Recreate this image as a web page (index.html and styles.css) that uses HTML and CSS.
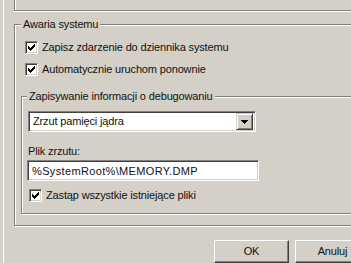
FILE: index.html
```html
<!DOCTYPE html>
<html lang="pl">
<head>
    <meta charset="UTF-8">
    <meta name="viewport" content="width=device-width, initial-scale=1.0">
    <title>Uruchamianie i odzyskiwanie</title>
    <link rel="stylesheet" href="styles.css">
</head>
<body>
    <div class="page">
        <div class="group-prev"></div>

        <fieldset class="group group-crash">
            <legend>Awaria systemu</legend>

            <label class="check">
                <span class="box"><svg width="7" height="7" viewBox="0 0 7 7" shape-rendering="crispEdges"><path d="M0 2h1v3H0zM1 3h1v3H1zM2 4h1v3H2zM3 3h1v3H3zM4 2h1v3H4zM5 1h1v3H5zM6 0h1v3H6z" fill="#000"/></svg></span>
                Zapisz zdarzenie do dziennika systemu
            </label>
            <label class="check">
                <span class="box"><svg width="7" height="7" viewBox="0 0 7 7" shape-rendering="crispEdges"><path d="M0 2h1v3H0zM1 3h1v3H1zM2 4h1v3H2zM3 3h1v3H3zM4 2h1v3H4zM5 1h1v3H5zM6 0h1v3H6z" fill="#000"/></svg></span>
                Automatycznie uruchom ponownie
            </label>

            <fieldset class="group group-debug">
                <legend>Zapisywanie informacji o debugowaniu</legend>

                <div class="combo">
                    <span class="combo-value">Zrzut pamięci jądra</span>
                    <span class="combo-btn"><svg width="7" height="4" viewBox="0 0 7 4" shape-rendering="crispEdges"><path d="M0 0h7v1H0zM1 1h5v1H1zM2 2h3v1H2zM3 3h1v1H3z" fill="#000"/></svg></span>
                </div>

                <div class="field-label">Plik zrzutu:</div>
                <div class="textbox">%SystemRoot%\MEMORY.DMP</div>

                <label class="check check-last">
                    <span class="box"><svg width="7" height="7" viewBox="0 0 7 7" shape-rendering="crispEdges"><path d="M0 2h1v3H0zM1 3h1v3H1zM2 4h1v3H2zM3 3h1v3H3zM4 2h1v3H4zM5 1h1v3H5zM6 0h1v3H6z" fill="#000"/></svg></span>
                    Zastąp wszystkie istniejące pliki
                </label>
            </fieldset>
        </fieldset>

        <div class="buttons">
            <button class="btn">OK</button>
            <button class="btn">Anuluj</button>
        </div>
    </div>
</body>
</html>
```

FILE: styles.css
```css
html, body {
    margin: 0;
    height: 100%;
    overflow: hidden;
}

body {
    background-color: #d4d0c8;
    font-family: 'Liberation Sans', Arial, sans-serif;
    font-size: 11px;
    line-height: 13px;
    letter-spacing: -0.15px;
    color: #111;
}

.page {
    margin-left: 3px;
    border-left: 1px solid #fff;
    height: 100%;
}

/* Etched group box, like the classic Windows one */
.group-prev {
    height: 10px;
    margin-left: 10px;
    margin-right: -20px;
    border-left: 1px solid #808080;
    border-bottom: 1px solid #808080;
    box-shadow: inset 1px 0 0 #fff, 0 1px 0 #fff;
}

.group {
    margin: 0;
    border: 1px solid #808080;
    box-shadow: inset 1px 1px 0 #fff, 1px 1px 0 #fff;
    min-width: 0;
}

.group legend {
    background-color: #d4d0c8;
    padding: 0 2px;
}

.group-crash {
    margin: 7px -20px 0 10px;
    padding: 10px 0 11px 10px;
}

.group-crash > legend {
    margin-left: -4px;
}

.group-debug {
    margin: 14px 0 0 -4px;
    padding: 8px 0 11px 6px;
}

.group-debug > legend {
    margin-left: -1px;
}

.check {
    display: flex;
    align-items: center;
    gap: 4px;
    height: 13px;
    margin-bottom: 9px;
}

.check-last {
    margin: 8px 0 0 1px;
}

.box {
    box-sizing: border-box;
    width: 13px;
    height: 13px;
    background-color: #fff;
    border: 1px solid;
    border-color: #808080 #fff #fff #808080;
    box-shadow: inset 1px 1px 0 #404040, inset -1px -1px 0 #d4d0c8;
    display: flex;
    align-items: center;
    justify-content: center;
}

.combo,
.textbox {
    box-sizing: border-box;
    background-color: #fff;
    border: 1px solid;
    border-color: #808080 #fff #fff #808080;
    box-shadow: inset 1px 1px 0 #404040, inset -1px -1px 0 #d4d0c8;
}

.combo {
    display: flex;
    align-items: center;
    justify-content: space-between;
    width: 228px;
    height: 21px;
    padding: 2px;
}

.combo-value {
    padding-left: 2px;
}

.combo-btn {
    box-sizing: border-box;
    width: 17px;
    height: 17px;
    background-color: #d4d0c8;
    border: 1px solid;
    border-color: #d4d0c8 #404040 #404040 #d4d0c8;
    box-shadow: inset 1px 1px 0 #fff, inset -1px -1px 0 #808080;
    display: flex;
    align-items: center;
    justify-content: center;
}

.field-label {
    margin-top: 13px;
}

.textbox {
    width: 232px;
    height: 21px;
    margin-top: 2px;
    padding: 4px 0 0 4px;
    margin-left: -1px;
    letter-spacing: 0.35px;
}

.buttons {
    display: flex;
    justify-content: flex-end;
    gap: 6px;
    margin: 14px -19px 0 0;
}

.btn {
    box-sizing: border-box;
    width: 75px;
    height: 23px;
    padding: 0;
    font: inherit;
    letter-spacing: inherit;
    color: #111;
    background-color: #d4d0c8;
    border: 1px solid;
    border-color: #fff #404040 #404040 #fff;
    box-shadow: inset -1px -1px 0 #808080;
}
```
